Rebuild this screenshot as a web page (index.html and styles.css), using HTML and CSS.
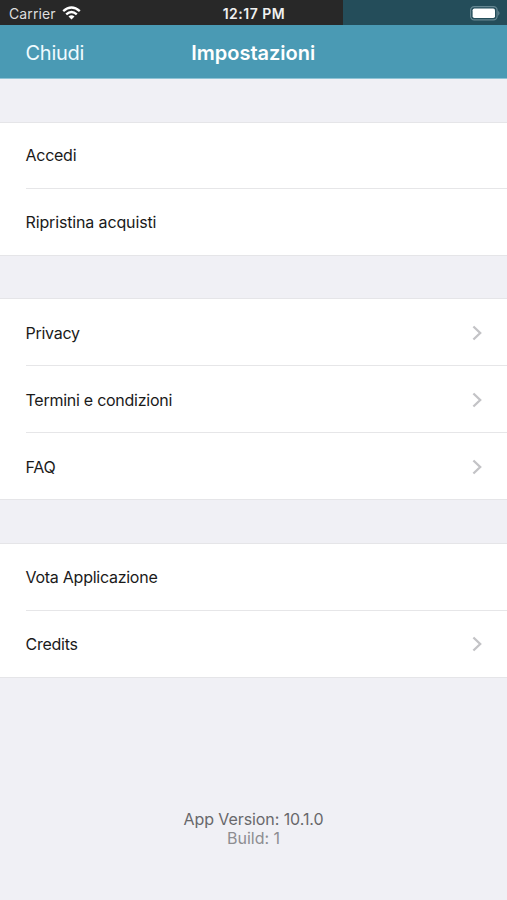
FILE: index.html
```html
<!DOCTYPE html>
<html lang="it">
<head>
<meta charset="utf-8">
<title>Impostazioni</title>
<link rel="stylesheet" href="styles.css">
</head>
<body>
<div class="screen">
  <div class="status">
    <div class="carrier"><span>Carrier</span>
      <svg class="wifi" width="19" height="14" viewBox="0 0 19 14"><g fill="none" stroke="#fff" stroke-width="2.4"><path d="M1.2 5.1Q9.5-2.2 17.8 5.1"/><path d="M4.2 8.4Q9.5 3.6 14.8 8.4"/></g><path d="M6.5 10.4Q9.5 7.9 12.5 10.4L9.5 13.6Z" fill="#fff"/></svg>
    </div>
    <div class="time">12:17 PM</div>
    <div class="power">
      <svg width="31" height="15" viewBox="0 0 31 15"><rect x=".6" y=".6" width="26.5" height="13.3" rx="3.6" fill="none" stroke="#668792" stroke-width="1.2"/><rect x="2.6" y="2.4" width="22.4" height="9.7" rx="1.8" fill="#fff"/><path d="M28.2 4.8Q30.9 7.2 28.2 9.7Z" fill="#668792"/></svg>
    </div>
  </div>
  <header class="nav"><span class="close">Chiudi</span><h1>Impostazioni</h1><span></span></header>
  <main>
    <section class="group account">
      <div class="row"><span>Accedi</span></div>
      <div class="row"><span class="wide">Ripristina acquisti</span></div>
    </section>
    <section class="group legal">
      <div class="row"><span>Privacy</span><svg class="chevron" viewBox="0 0 10 16"><path d="M1.4 1.5L8.2 8L1.4 14.5"/></svg></div>
      <div class="row"><span>Termini e condizioni</span><svg class="chevron" viewBox="0 0 10 16"><path d="M1.4 1.5L8.2 8L1.4 14.5"/></svg></div>
      <div class="row"><span>FAQ</span><svg class="chevron" viewBox="0 0 10 16"><path d="M1.4 1.5L8.2 8L1.4 14.5"/></svg></div>
    </section>
    <section class="group">
      <div class="row"><span>Vota Applicazione</span></div>
      <div class="row"><span>Credits</span><svg class="chevron" viewBox="0 0 10 16"><path d="M1.4 1.5L8.2 8L1.4 14.5"/></svg></div>
    </section>
  </main>
  <footer><div class="version">App Version: 10.1.0</div><div class="build">Build: 1</div></footer>
</div>
</body>
</html>
```
FILE: styles.css
```css
* { box-sizing: border-box; }
body { margin: 0; font-family: Inter, "Liberation Sans", sans-serif; background: #f0f0f5; }
.screen { width: 507px; height: 900px; overflow: hidden; }
.status {
  height: 25px; padding: 2px 6px 0 9px;
  display: grid; grid-template-columns: 1fr auto 1fr; align-items: center;
  color: #fff; font-size: 14px; line-height: 22px;
  background: linear-gradient(90deg, #282828 343px, #244d5a 343px);
}
.carrier { display: flex; align-items: center; gap: 6px; color: #dedede; letter-spacing: .12px; }
.wifi { margin-top: -2px; }
.time { font-weight: 600; font-size: 14px; letter-spacing: .5px; color: #f0f0f0; margin-left: -2px; }
.power { display: flex; justify-content: flex-end; margin-top: -1px; }
.nav {
  height: 54px; padding: 2px 26px 0 25.5px; border-bottom: 1px solid #8fc3d5;
  display: grid; grid-template-columns: 1fr auto 1fr; align-items: center;
  background: #4a9ab4; color: #fff;
}
.close { font-size: 20px; letter-spacing: -.25px; color: #f0fbff; }
h1 { margin: 0; font-size: 20px; font-weight: 600; }
main { padding-top: 43px; }
.group { background: #fff; border: solid #e5e5e8; border-width: 1px 0; }
.account { margin-bottom: 42px; }
.legal { margin-bottom: 43px; }
.row {
  height: 67px; margin-left: 26px; padding-right: 25px;
  display: flex; align-items: center; justify-content: space-between;
  font-size: 16px; letter-spacing: -.26px; color: #1a1a1a;
}
.row span { margin-left: -.5px; }
.row .wide { letter-spacing: -.14px; }
.row + .row { border-top: 1px solid #e6e6e8; }
.row:first-child { height: 66px; }
.account .row:first-child { height: 65px; padding-bottom: 1px; }
.legal .row { padding-top: 1px; }
.chevron { width: 10px; height: 16px; fill: none; stroke: #c3c3c6; stroke-width: 2.3; }
footer { margin-top: 132px; text-align: center; font-size: 16px; line-height: 19px; }
.version { color: #68686b; letter-spacing: -.08px; }
.build { color: #8d8d91; }
```
